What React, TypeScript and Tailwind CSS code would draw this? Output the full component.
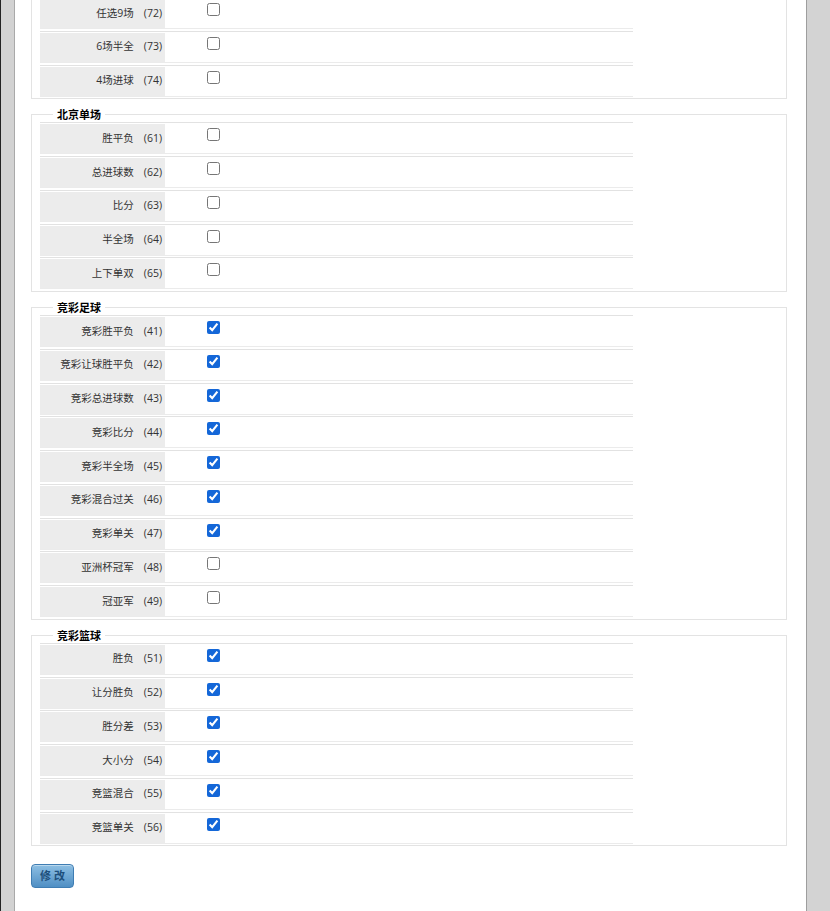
import React from "react";

type Item = { name: string; code: number; checked: boolean };
type Group = { title?: string; items: Item[] };

const groups: Group[] = [
  {
    items: [
      { name: "任选9场", code: 72, checked: false },
      { name: "6场半全", code: 73, checked: false },
      { name: "4场进球", code: 74, checked: false },
    ],
  },
  {
    title: "北京单场",
    items: [
      { name: "胜平负", code: 61, checked: false },
      { name: "总进球数", code: 62, checked: false },
      { name: "比分", code: 63, checked: false },
      { name: "半全场", code: 64, checked: false },
      { name: "上下单双", code: 65, checked: false },
    ],
  },
  {
    title: "竞彩足球",
    items: [
      { name: "竞彩胜平负", code: 41, checked: true },
      { name: "竞彩让球胜平负", code: 42, checked: true },
      { name: "竞彩总进球数", code: 43, checked: true },
      { name: "竞彩比分", code: 44, checked: true },
      { name: "竞彩半全场", code: 45, checked: true },
      { name: "竞彩混合过关", code: 46, checked: true },
      { name: "竞彩单关", code: 47, checked: true },
      { name: "亚洲杯冠军", code: 48, checked: false },
      { name: "冠亚军", code: 49, checked: false },
    ],
  },
  {
    title: "竞彩篮球",
    items: [
      { name: "胜负", code: 51, checked: true },
      { name: "让分胜负", code: 52, checked: true },
      { name: "胜分差", code: 53, checked: true },
      { name: "大小分", code: 54, checked: true },
      { name: "竞篮混合", code: 55, checked: true },
      { name: "竞篮单关", code: 56, checked: true },
    ],
  },
];

function Row({ item }: { item: Item }) {
  return (
    <div className="w-[593px] border-t border-b border-t-[#e2e2e2] border-b-[#ebebeb] pt-[1px] mb-[1.75px] flex">
      <div className="w-[125px] h-[29px] bg-[#ececec] flex items-center justify-end gap-[10px] pr-[3px] text-[#333]">
        <span>{item.name}</span>
        <span>({item.code})</span>
      </div>
      <div className="flex-1 h-[29px] pl-[38px] pt-[1px]">
        <input
          type="checkbox"
          defaultChecked={item.checked}
          className="w-[13px] h-[13px] mt-[3px] ml-[4px] accent-[#1467d8]"
        />
      </div>
    </div>
  );
}

export default function App() {
  return (
    <div
      className="flex h-[911px] overflow-hidden bg-white text-[10.5px]"
      style={{ fontFamily: '"Open Sans", "Noto Sans CJK SC", sans-serif' }}
    >
      {/* left frame */}
      <div className="w-[15px] shrink-0 bg-[#d2d2d2] border-l border-l-[#222] border-r border-r-[#a9a9a9]" />

      <div className="flex-1 pl-[16px] pr-[19px]">
        {groups.map((g, i) => (
          <fieldset
            key={i}
            className={`border border-[#e3e3e3] px-[8px] pb-0 mb-[8px] ${
              g.title ? "" : "-mt-[4px]"
            }`}
          >
            {g.title && (
              <legend className="ml-[13px] px-[4px] font-bold text-[11px] leading-[15px] text-black">
                {g.title}
              </legend>
            )}
            {g.items.map((it) => (
              <Row key={it.code} item={it} />
            ))}
          </fieldset>
        ))}

        <button className="mt-[10px] w-[43px] h-[24px] rounded-[4px] border border-[#3f7db3] bg-gradient-to-b from-[#8dbfe3] to-[#4f8fc4] text-[#1d4f7c] font-bold text-[11px] tracking-[3px] pl-[3px] shadow-[inset_0_1px_0_rgba(255,255,255,0.4)]">
          修改
        </button>
      </div>

      {/* right frame */}
      <div className="w-[24px] shrink-0 bg-[#d3d3d3] border-l border-l-[#9e9e9e]" />
    </div>
  );
}
